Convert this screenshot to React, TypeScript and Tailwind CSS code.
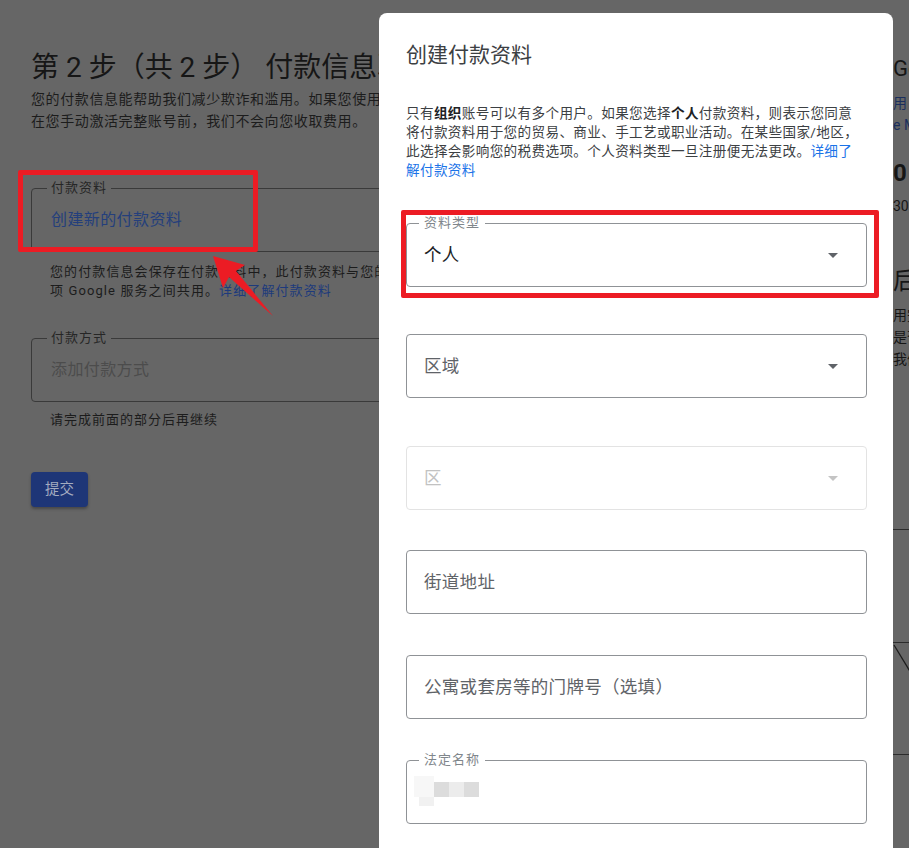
import React from "react";

const font = "font-[Roboto,'Noto_Sans_CJK_SC',sans-serif]";

const Caret = ({ light }: { light?: boolean }) => (
  <svg width="10" height="5" viewBox="0 0 10 5" className="shrink-0">
    <path d="M0 0h10L5 5z" fill={light ? "#c4c4c4" : "#5f6368"} />
  </svg>
);

interface FieldProps {
  label?: string;
  value?: React.ReactNode;
  tone?: "value" | "hint" | "disabled";
  select?: boolean;
  className?: string;
}

const Field: React.FC<FieldProps> = ({ label, value, tone = "hint", select, className }) => {
  const border = tone === "disabled" ? "border-[#e3e3e3]" : "border-[#8f9296]";
  const text =
    tone === "value" ? "text-[#202124]" : tone === "disabled" ? "text-[#c2c2c2]" : "text-[#5f6368]";
  return (
    <div
      className={`relative flex h-[64px] items-center justify-between rounded-[4px] border pl-[17px] pr-[28px] ${border} ${className ?? ""}`}
    >
      {label && (
        <span className="absolute left-[12px] top-[-10px] bg-white px-[5px] text-[13px] leading-[18px] tracking-[1px] text-[#80868b]">
          {label}
        </span>
      )}
      <span className={`text-[17.5px] tracking-[0.3px] ${text}`}>{value}</span>
      {select && <Caret light={tone === "disabled"} />}
    </div>
  );
};

const BackPage = () => (
  <div className="flex h-full">
    {/* left column, mostly hidden behind the dialog */}
    <div className="w-[893px] shrink-0 overflow-hidden pl-[31px] pt-[50px] text-[#161616]">
      <h1 className="whitespace-nowrap text-[28px] leading-[36px]">第 2 步（共 2 步） 付款信息验证</h1>
      <p className="mt-[2px] whitespace-nowrap text-[14px] leading-[22px] tracking-[0.6px] text-[#1c1c1c]">
        您的付款信息能帮助我们减少欺诈和滥用。如果您使用信用卡或借记卡，
        <br />
        在您手动激活完整账号前，我们不会向您收取费用。
      </p>

      <div className="relative mt-[56px] flex h-[64px] w-[600px] items-center rounded-[4px] border border-[#3a3a3a] px-[19px]">
        <span className="absolute left-[15px] top-[-10px] bg-[#666666] px-[4px] text-[13px] leading-[18px] tracking-[1px] text-[#262626]">
          付款资料
        </span>
        <span className="text-[16px] tracking-[0.4px] text-[#243f7c]">创建新的付款资料</span>
      </div>
      <p className="ml-[19px] mt-[10px] whitespace-nowrap text-[13px] leading-[19px] tracking-[1.1px] text-[#1c1c1c]">
        您的付款信息会保存在付款资料中，此付款资料与您的 Google Cloud 账号和其他多
        <br />
        项 Google 服务之间共用。<span className="text-[#1d3a7c]">详细了解付款资料</span>
      </p>

      <div className="relative mt-[38px] flex h-[64px] w-[600px] items-center rounded-[4px] border border-[#3a3a3a] px-[19px]">
        <span className="absolute left-[15px] top-[-10px] bg-[#666666] px-[4px] text-[13px] leading-[18px] tracking-[1px] text-[#262626]">
          付款方式
        </span>
        <span className="text-[16px] tracking-[0.4px] text-[#4c4c4c]">添加付款方式</span>
      </div>
      <p className="ml-[19px] mt-[8px] text-[13px] leading-[19px] tracking-[1px] text-[#1c1c1c]">
        请完成前面的部分后再继续
      </p>

      <button className="mt-[43px] h-[35px] w-[57px] rounded-[4px] bg-[#1e3677] text-[14.5px] text-[#a4acc0] shadow-[0_2px_3px_rgba(0,0,0,0.3)]">
        提交
      </button>
    </div>

    {/* right column, peeking out at the edge */}
    <div className="shrink-0 whitespace-nowrap pt-[54px] text-[#161616]">
      <h2 className="text-[22px] leading-[30px]">Google Cloud 免费试用</h2>
      <p className="mt-[8px] text-[14px] leading-[22px] text-[#1b2f5e]">
        用 300 美元的赠金免费试用
        <br />
        e Maps Platform 及其他产品
      </p>
      <p className="mt-[22px] text-[24px] font-bold leading-[30px]">0 美元</p>
      <p className="mt-[8px] text-[14px] leading-[20px]">30 天内有效</p>
      <h3 className="mt-[50px] text-[24px] leading-[30px]">后续步骤</h3>
      <p className="mt-[8px] text-[14px] leading-[22px]">
        用完赠金后
        <br />
        是否升级由您决定
        <br />
        我们不会自动收费
      </p>
      <div className="mt-[159px] h-[113px] w-[40px] border-t border-[#2c2c2c]" />
      <div className="relative h-[112px] w-[40px] border-t border-[#2c2c2c]">
        <svg width="40" height="112" className="absolute left-0 top-0">
          <line x1="1" y1="2" x2="18" y2="30" stroke="#1c1c1c" strokeWidth="1.3" />
        </svg>
      </div>
      <div className="h-[40px] w-[40px] border-t border-[#2c2c2c]" />
    </div>
  </div>
);

const Dialog = () => (
  <div className="absolute left-[379px] top-[13px] h-[860px] w-[514px] rounded-t-[8px] bg-white pl-[27px] pr-[26px] pt-[28px]">
    <h2 className="text-[21px] leading-[28px] text-[#3c4043]">创建付款资料</h2>
    <p className="mt-[35px] text-[13.6px] leading-[19px] tracking-[0.35px] text-[#3c4043]">
      只有<b className="font-bold text-[#202124]">组织</b>账号可以有多个用户。如果您选择
      <b className="font-bold text-[#202124]">个人</b>付款资料，则表示您同意
      <br />
      将付款资料用于您的贸易、商业、手工艺或职业活动。在某些国家/地区，
      <br />
      此选择会影响您的税费选项。个人资料类型一旦注册便无法更改。
      <span className="text-[#1a73e8]">详细了</span>
      <br />
      <span className="text-[#1a73e8]">解付款资料</span>
    </p>

    <Field className="mt-[43px]" label="资料类型" value="个人" tone="value" select />
    <Field className="mt-[47px]" value="区域" select />
    <Field className="mt-[48px]" value="区" tone="disabled" select />
    <Field className="mt-[40px]" value="街道地址" />
    <Field className="mt-[41px]" value="公寓或套房等的门牌号（选填）" />
    <div className="relative mt-[41px] h-[64px] rounded-[4px] border border-[#8f9296]">
      <span className="absolute left-[12px] top-[-10px] bg-white px-[5px] text-[13px] leading-[18px] tracking-[1px] text-[#80868b]">
        法定名称
      </span>
      {/* blurred name */}
      <div className="ml-[7px] mt-[15px] flex">
        <div className="flex flex-col">
          <div className="h-[21px] w-[20px] bg-[#f7f7f7]" />
          <div className="ml-[5px] h-[9px] w-[15px] bg-[#f1f1f1]" />
        </div>
        <div className="mt-[6px] h-[15px] w-[15px] bg-[#dcdcdc]" />
        <div className="mt-[6px] h-[15px] w-[15px] bg-[#ececec]" />
        <div className="mt-[6px] h-[15px] w-[15px] bg-[#dcdcdc]" />
      </div>
    </div>
  </div>
);

const Annotations = () => (
  <>
    <div className="absolute left-[18px] top-[170px] h-[82px] w-[240px] rounded-[2px] border-[5px] border-[#ec1c24]" />
    <div className="absolute left-[401px] top-[210px] h-[88px] w-[478px] rounded-[2px] border-[5px] border-[#ec1c24]" />
    <svg className="pointer-events-none absolute left-0 top-0" width="909" height="848">
      <polygon points="213,256 245,265 236,271 273,316 229,277 223,288" fill="#ec1c24" />
    </svg>
  </>
);

export default function App() {
  return (
    <div className={`relative h-[848px] w-[909px] overflow-hidden bg-[#666666] ${font}`}>
      <BackPage />
      <Dialog />
      <Annotations />
    </div>
  );
}
